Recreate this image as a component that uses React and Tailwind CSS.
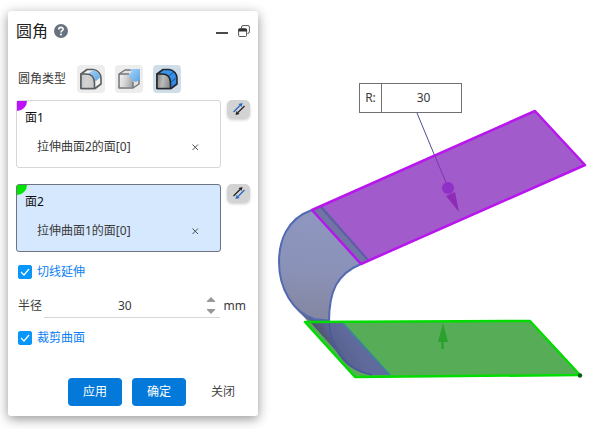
import React, { useState } from 'react';

const SolidIcon = ({ variant }) => {
  const full = variant === 'full';
  const corner = variant === 'corner';
  const stroke = full ? '#24282e' : corner ? '#73777b' : '#5a5d60';

  return (
    <svg className="w-[22px] h-[22px]" viewBox="0 0 22 22" fill="none" aria-hidden="true">
      <defs>
        <linearGradient id={`metal-${variant}`} x1="0" y1="0" x2="1" y2="0.2">
          <stop offset="0" stopColor={full ? '#7c7c7c' : corner ? '#eeeeee' : '#c4c4c4'} />
          <stop offset="0.5" stopColor={full ? '#bcbcbc' : '#d4d4d4'} />
          <stop offset="1" stopColor={full ? '#909090' : corner ? '#a8a8a8' : '#c8c8c8'} />
        </linearGradient>
        <linearGradient id={`blue-${variant}`} x1="0" y1="0" x2="1" y2="1">
          <stop offset="0" stopColor={full ? '#3f9aec' : '#a6d3fa'} />
          <stop offset="1" stopColor={full ? '#2f86e4' : '#5ba5e6'} />
        </linearGradient>
      </defs>
      {corner ? (
        <>
          <path d="M1 6 L7 2 H21 V16 L15 20 H1 Z" fill="#e2e2e2" stroke={stroke} strokeWidth="1.5" strokeLinejoin="round" />
          <path d="M2 7 H15 V19 H2 Z" fill="url(#metal-corner)" />
          <path d="M1 6 H11 M15 14 V20" stroke={stroke} strokeWidth="1.5" />
          <path d="M12 1 H22 V11 L18 14 L14 13 V10 H11 V6 L14 4 Z" fill="url(#blue-corner)" />
        </>
      ) : (
        <>
          <path
            d="M1 6 L7 1.5 H13 C18 2 21 6 21 10 V16 L15 20.5 H1 Z"
            fill={full ? 'url(#blue-full)' : '#f2f2f2'}
            stroke={stroke}
            strokeWidth="1.6"
            strokeLinejoin="round"
          />
          {full ? (
            <path d="M12.5 8 L18 4 M15 14 L20 10" stroke="#1b4677" strokeWidth="0.8" />
          ) : (
            <path d="M8 5.5 L13 2.3 C17 3 20 6.5 20 9.5 L15.5 13.5 C15 9 12 6 8 5.5 Z" fill="url(#blue-edge)" />
          )}
          <path d="M1 6 H6 C11 6 14.5 9 14.5 15 V20.5 H1 Z" fill={`url(#metal-${variant})`} stroke={stroke} strokeWidth="1.6" strokeLinejoin="round" />
        </>
      )}
    </svg>
  );
};

const SwapIcon = ({ up, down }) => (
  <svg className="w-3 h-3" viewBox="0 0 12 12" fill="none" aria-hidden="true">
    <path d="M0.5 9 L7 2.5" stroke={up} strokeWidth="1.2" />
    <path d="M9.5 0 L8.5 4 L5.5 1 Z" fill={up} />
    <path d="M11.5 3 L5 9.5" stroke={down} strokeWidth="1.2" />
    <path d="M2.5 12 L3.5 8 L6.5 11 Z" fill={down} />
  </svg>
);

const TypeButton = ({ variant, label, selected, onClick }) => (
  <button
    type="button"
    aria-label={label}
    aria-pressed={selected}
    onClick={onClick}
    className={`flex w-7 h-7 items-center justify-center rounded-sm ${selected ? 'bg-[#cfdde8]' : 'bg-[#ededed]'}`}
  >
    <SolidIcon variant={variant} />
  </button>
);

const FacePicker = ({ title, item, marker, active, up, down }) => (
  <div className="flex items-start gap-1.5">
    <div
      className={`relative flex-1 h-[68px] rounded-[3px] border pl-2 pt-2 ${
        active ? 'border-[#6d7480] bg-[#d5e8fe]' : 'border-[#d8d6d8] bg-white'
      }`}
    >
      <span className={`absolute left-0 top-0 w-2.5 h-2.5 rounded-br-full ${marker}`} />
      <div className="leading-[18px] text-[#111]">{title}</div>
      <div className="mt-2.5 flex items-center justify-between pl-3 pr-[21px] leading-5">
        <span>{item}</span>
        <button type="button" aria-label={`移除 ${item}`} className="flex w-2 h-5 items-center justify-center">
          <svg className="w-[7px] h-[7px]" viewBox="0 0 7 7" aria-hidden="true">
            <path d="M0.5 0.5 L6 6 M6 0.5 L0.5 6" stroke="#4b4e52" strokeWidth="1" />
          </svg>
        </button>
      </div>
    </div>
    <button
      type="button"
      aria-label={`反转${title}`}
      className="flex w-[23px] h-[18px] items-center justify-center rounded-[5px] bg-[#d3d3d3] shadow-[0_2px_3px_rgba(0,0,0,0.2)]"
    >
      <SwapIcon up={up} down={down} />
    </button>
  </div>
);

const CheckRow = ({ label }) => {
  const [checked, setChecked] = useState(true);

  return (
    <label className="flex items-center gap-[5px] pl-0.5 leading-4 text-[#0a80f5]">
      <span className="relative w-3.5 h-3.5">
        <input
          type="checkbox"
          checked={checked}
          onChange={(e) => setChecked(e.target.checked)}
          className="block w-3.5 h-3.5 appearance-none rounded-[2px] border border-[#0797f8] bg-white checked:bg-[#0797f8]"
        />
        <svg className="pointer-events-none absolute inset-0 w-3.5 h-3.5" viewBox="0 0 14 14" fill="none" aria-hidden="true">
          <path d="M3 7 L6 10 L11 4" stroke="white" strokeWidth="1.2" />
        </svg>
      </span>
      {label}
    </label>
  );
};

const FilletPanel = ({ radius, setRadius }) => {
  const [type, setType] = useState('full');

  const step = (delta) => setRadius(String(Number(radius) + delta));

  return (
    <section className="ml-2 mt-[11px] w-[250px] shrink-0 self-start rounded-[3px] bg-white px-2 pb-2.5 shadow-[0_3px_12px_rgba(0,0,0,0.42)]">
      <header className="flex items-center pt-2">
        <h1 className="text-base leading-6 text-[#222]">圆角</h1>
        <button type="button" aria-label="帮助" className="ml-1.5">
          <svg className="w-3.5 h-3.5" viewBox="0 0 14 14" fill="none" aria-hidden="true">
            <circle cx="7" cy="7" r="7" fill="#68727e" />
            <path d="M4.8 5.4 C4.8 2.7 9.3 2.8 9.2 5.2 C9.1 6.8 7 6.7 7 8.5" stroke="white" strokeWidth="1.6" />
            <circle cx="7" cy="10.6" r="1" fill="white" />
          </svg>
        </button>
        <button type="button" aria-label="最小化" className="ml-auto mr-2.5">
          <svg className="w-3 h-3" viewBox="0 0 12 12" aria-hidden="true">
            <path d="M0 8 H12" stroke="#4a4a4a" strokeWidth="2" />
          </svg>
        </button>
        <button type="button" aria-label="还原">
          <svg className="w-3 h-3" viewBox="0 0 12 12" fill="none" aria-hidden="true">
            <path d="M3.5 3 V2 Q3.5 0.6 5 0.6 H10 Q11.4 0.6 11.4 2 V7 Q11.4 8.5 9.5 8.5" stroke="#555" />
            <rect x="0.6" y="3.5" width="8" height="8" rx="1.2" stroke="#555" />
            <path d="M0.5 4 H9 V6.5 H0.5 Z" fill="#333" />
          </svg>
        </button>
      </header>

      <div className="mt-[22px] flex items-center gap-2.5 pl-0.5">
        <span className="mr-px">圆角类型</span>
        <TypeButton variant="edge" label="边圆角" selected={type === 'edge'} onClick={() => setType('edge')} />
        <TypeButton variant="corner" label="角圆角" selected={type === 'corner'} onClick={() => setType('corner')} />
        <TypeButton variant="full" label="面圆角" selected={type === 'full'} onClick={() => setType('full')} />
      </div>

      <div className="mt-[7px] flex flex-col gap-4">
        <FacePicker title="面1" item="拉伸曲面2的面[0]" marker="bg-[#bd12f8]" up="#2468c2" down="#222222" />
        <FacePicker title="面2" item="拉伸曲面1的面[0]" marker="bg-[#00e400]" active up="#222222" down="#2468c2" />
      </div>

      <div className="mt-3">
        <CheckRow label="切线延伸" />
      </div>

      <div className="mt-3.5 flex items-center pl-0.5 pr-1">
        <label htmlFor="radius" className="mr-0.5 shrink-0">半径</label>
        <div className="mr-1 flex h-6 min-w-0 flex-1 items-center border-b border-[#d6d6d6]">
          <input
            id="radius"
            value={radius}
            onChange={(e) => setRadius(e.target.value)}
            className="w-full min-w-0 flex-1 bg-transparent text-center outline-none"
          />
          <div className="mr-1 flex flex-col gap-[7px]">
            <button type="button" aria-label="增加" onClick={() => step(1)}>
              <svg className="block w-2.5 h-[5px]" viewBox="0 0 10 5" aria-hidden="true">
                <path d="M5 0 L9 4 V5 H1 V4 Z" fill="#999" />
              </svg>
            </button>
            <button type="button" aria-label="减少" onClick={() => step(-1)}>
              <svg className="block w-2.5 h-[5px]" viewBox="0 0 10 5" aria-hidden="true">
                <path d="M5 5 L9 1 V0 H1 V1 Z" fill="#999" />
              </svg>
            </button>
          </div>
        </div>
        <span>mm</span>
      </div>

      <div className="mt-3">
        <CheckRow label="裁剪曲面" />
      </div>

      <footer className="mt-8 flex justify-end gap-2.5">
        <button type="button" className="h-7 w-[54px] rounded-[4px] bg-[#0379da] text-white">应用</button>
        <button type="button" className="h-7 w-[54px] rounded-[4px] bg-[#0379da] text-white">确定</button>
        <button type="button" className="h-7 w-[54px] text-[#444]">关闭</button>
      </footer>
    </section>
  );
};

const Scene = () => (
  <svg className="block w-[344px] h-[429px]" viewBox="258 0 344 429" fill="none" aria-hidden="true">
    <defs>
      <linearGradient id="bend" x1="325" y1="210" x2="310" y2="330" gradientUnits="userSpaceOnUse">
        <stop offset="0" stopColor="#8f96c0" />
        <stop offset="0.5" stopColor="#8b92b8" />
        <stop offset="1" stopColor="#82849c" />
      </linearGradient>
      <linearGradient id="under" x1="325" y1="350" x2="350" y2="335" gradientUnits="userSpaceOnUse">
        <stop offset="0" stopColor="#4c4d60" />
        <stop offset="0.5" stopColor="#5a6492" />
        <stop offset="1" stopColor="#606b9d" />
      </linearGradient>
    </defs>

    <path d="M312 210 C286 219 279 242 279 262 C279 291 295 313 311 321 L330 322 C328 292 337 275 361 264 Z" fill="url(#bend)" />
    <path d="M293 304 C299 313 306 318 316 319 L329 320 V323 H309 Z" fill="#4c5783" fillOpacity="0.75" />
    <path d="M312 210 C286 219 279 242 279 262 C279 289 293 312 314 319 L330 321" stroke="#5369b2" strokeWidth="2" />
    <path d="M361 264 C337 274 329 291 329 322" stroke="#5369b2" strokeWidth="2" />

    <path d="M312 210 L535 111 L585 165 L361 264 Z" fill="#a25bca" />
    <path d="M312 210 L322 205 L369 260 L361 264 Z" fill="#7075a4" />
    <path d="M321 207 L368 260" stroke="#6359ac" strokeWidth="2" />
    <path d="M312 210 L535 111 L585 165 L361 264 Z" stroke="#b915ef" strokeWidth="2.5" strokeLinejoin="round" />

    <path d="M305 322 L530 321 L580 375 L355 377 Z" fill="#57ad57" />
    <path d="M311 323 L342 323 L390 375 H371 C357 373 345 366 336 351 Z" fill="url(#under)" />
    <path d="M329 323 C331 350 347 370 372 375" stroke="#4858a0" strokeWidth="1.5" />
    <path d="M343 323 L390 375" stroke="#34869f" strokeWidth="1.3" />
    <path d="M305 322 L530 321 L580 375 L355 377 Z" stroke="#00dc00" strokeWidth="2.5" strokeLinejoin="round" />
    <circle cx="580" cy="375.5" r="2.2" fill="#075f13" />

    <path d="M417 113 L434 154" stroke="#4b4f96" strokeWidth="1" />
    <path d="M434 154 L448 187" stroke="#8230b9" strokeWidth="1" />
    <path d="M446 196 L455 192 L459 212 Z" fill="#8e2cb5" />
    <circle cx="448" cy="188" r="6" fill="#9130c8" />
    <path d="M443 323 L448 342 H438 Z" fill="#2ca02c" />
    <path d="M442.5 341 V349" stroke="#2ca02c" strokeWidth="2.5" />
  </svg>
);

const App = () => {
  const [radius, setRadius] = useState('30');

  return (
    <div className="flex min-h-screen overflow-hidden bg-white text-xs text-[#3a3a3a] [font-family:'Noto_Sans','Noto_Sans_CJK_SC',sans-serif]">
      <FilletPanel radius={radius} setRadius={setRadius} />
      <main className="relative min-w-0 flex-1">
        <Scene />
        <div className="absolute left-[101px] top-[83px] flex h-[30px] w-[103px] border border-[#707070] bg-white">
          <label htmlFor="radius-tag" className="flex w-[22px] items-center justify-center border-r border-[#707070]">
            R:
          </label>
          <input
            id="radius-tag"
            value={radius}
            onChange={(e) => setRadius(e.target.value)}
            className="min-w-0 flex-1 pl-1 text-center outline-none"
          />
        </div>
      </main>
    </div>
  );
};

export default App;
